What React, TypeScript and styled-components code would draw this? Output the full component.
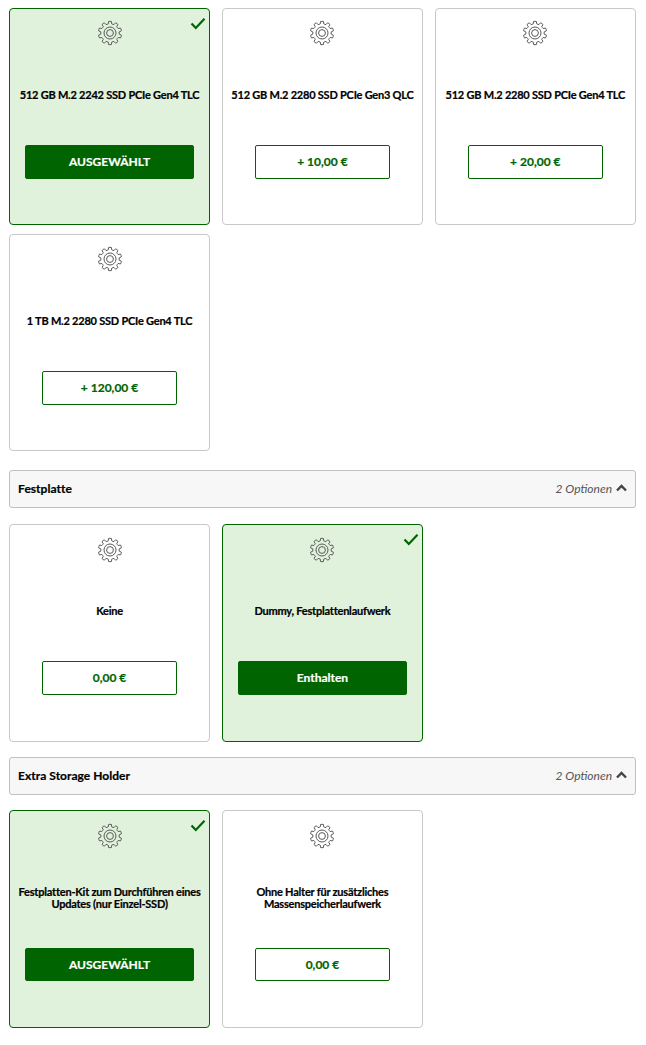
import React from "react";
import styled, { createGlobalStyle } from "styled-components";

const Global = createGlobalStyle`
  html, body { margin: 0; padding: 0; background: #fff; }
  body { font-family: Lato, "Liberation Sans", sans-serif; color: #000; }
`;

const Page = styled.div`
  width: 646px;
  box-sizing: border-box;
  padding: 8px 10px 0 9.1px;
  display: flex;
  flex-direction: column;
`;

const CardGrid = styled.div<{ $after: number }>`
  display: grid;
  grid-template-columns: repeat(3, 200.9px);
  column-gap: 12px;
  row-gap: 9px;
  margin-bottom: ${(p) => p.$after}px;
`;

type Metrics = { height: number; pad: number; title: number; button: number };
const BASE: Metrics = { height: 217, pad: 11, title: 99, button: 34 };
const MIDDLE: Metrics = { height: 218, pad: 12, title: 98, button: 34 };
const LAST: Metrics = { height: 218, pad: 12, title: 99, button: 33 };

const Card = styled.div<{ $selected?: boolean; $height: number; $pad: number }>`
  position: relative;
  height: ${(p) => p.$height}px;
  box-sizing: border-box;
  border: 1px solid ${(p) => (p.$selected ? "#006400" : "#c8c8c8")};
  border-radius: 4px;
  background: ${(p) => (p.$selected ? "#e0f1dc" : "#fff")};
  display: flex;
  flex-direction: column;
  align-items: center;
  padding-top: ${(p) => p.$pad}px;
`;

const GearWrap = styled.div`
  height: 26px;
  line-height: 0;
`;

const Title = styled.div<{ $height: number }>`
  height: ${(p) => p.$height}px;
  padding: 0 6px 2px;
  box-sizing: border-box;
  width: 100%;
  font-size: 11px;
  letter-spacing: -0.22px;
  line-height: 12px;
  font-weight: 700;
  -webkit-text-stroke: 0.2px #000;
  text-align: center;
  display: flex;
  align-items: center;
  justify-content: center;
`;

const Action = styled.div<{ $selected?: boolean; $height: number }>`
  box-sizing: border-box;
  height: ${(p) => p.$height}px;
  width: ${(p) => (p.$selected ? "169px" : "135px")};
  border: 1px solid #006400;
  border-radius: 2px;
  background: ${(p) => (p.$selected ? "#006400" : "#fff")};
  color: ${(p) => (p.$selected ? "#fff" : "#006400")};
  font-size: 12px;
  font-weight: 700;
  -webkit-text-stroke: 0.2px currentColor;
  padding-bottom: 1px;
  display: flex;
  align-items: center;
  justify-content: center;
`;

const Check = styled.svg`
  position: absolute;
  top: 8px;
  right: 3px;
`;

const Section = styled.div<{ $after: number }>`
  height: 38px;
  box-sizing: border-box;
  border: 1px solid #c0c0c0;
  border-radius: 3px;
  background: #f7f7f7;
  display: flex;
  align-items: center;
  justify-content: space-between;
  padding: 0 8px 2px 8px;
  margin-bottom: ${(p) => p.$after}px;
`;

const SectionTitle = styled.span`
  font-size: 12px;
  font-weight: 700;
  letter-spacing: 0.03px;
  -webkit-text-stroke: 0.2px #000;
`;

const SectionMeta = styled.span`
  display: flex;
  align-items: center;
  gap: 4px;
  font-size: 12px;
  font-style: italic;
  color: #555;
`;

function gearPath(cx: number, cy: number, teeth: number, ro: number, ri: number) {
  const pts: string[] = [];
  const step = (Math.PI * 2) / teeth;
  for (let i = 0; i < teeth; i++) {
    const a = i * step - Math.PI / 2;
    const p = (r: number, t: number) =>
      `${(cx + r * Math.cos(a + t * step)).toFixed(2)} ${(cy + r * Math.sin(a + t * step)).toFixed(2)}`;
    pts.push(`${i === 0 ? "M" : "L"}${p(ri, -0.3)}`);
    pts.push(`L${p(ro, -0.2)}`);
    pts.push(`Q${p(ro + 0.3, 0)} ${p(ro, 0.2)}`);
    pts.push(`L${p(ri, 0.3)}`);
    pts.push(`Q${p(ri - 0.3, 0.5)} ${p(ri, 0.7)}`);
  }
  return pts.join(" ") + "Z";
}

const Gear = () => (
  <svg width="26" height="26" viewBox="0 0 26 26" fill="none" stroke="#5a5a5a" strokeWidth="1">
    <path d={gearPath(13, 13, 10, 11.6, 9.3)} strokeLinejoin="round" />
    <circle cx="13" cy="13" r="6" />
    <circle cx="13" cy="13" r="3.4" />
  </svg>
);

const CheckMark = () => (
  <Check width="16" height="13" viewBox="0 0 16 13" fill="none" stroke="#006400" strokeWidth="2.2">
    <path d="M1.5 6.5 L5.8 11 L14.5 1.8" />
  </Check>
);

const Chevron = () => (
  <svg width="11" height="8" viewBox="0 0 11 8" fill="none" stroke="#444" strokeWidth="2.4">
    <path d="M1 6.5 L5.5 2 L10 6.5" />
  </svg>
);

type Opt = { title: string; action: string; selected?: boolean; m?: Metrics };

const OptionCard = ({ title, action, selected, m = BASE }: Opt) => (
  <Card $selected={selected} $height={m.height} $pad={m.pad}>
    {selected && <CheckMark />}
    <GearWrap>
      <Gear />
    </GearWrap>
    <Title $height={m.title}>{title}</Title>
    <Action $selected={selected} $height={m.button}>
      {action}
    </Action>
  </Card>
);

const SectionBar = ({ title, after }: { title: string; after: number }) => (
  <Section $after={after}>
    <SectionTitle>{title}</SectionTitle>
    <SectionMeta>
      2 Optionen <Chevron />
    </SectionMeta>
  </Section>
);

export default function App() {
  return (
    <Page>
      <Global />
      <CardGrid $after={19}>
        <OptionCard title="512 GB M.2 2242 SSD PCIe Gen4 TLC" action="AUSGEWÄHLT" selected />
        <OptionCard title="512 GB M.2 2280 SSD PCIe Gen3 QLC" action="+ 10,00 €" />
        <OptionCard title="512 GB M.2 2280 SSD PCIe Gen4 TLC" action="+ 20,00 €" />
        <OptionCard title="1 TB M.2 2280 SSD PCIe Gen4 TLC" action="+ 120,00 €" />
      </CardGrid>
      <SectionBar title="Festplatte" after={16} />
      <CardGrid $after={15}>
        <OptionCard title="Keine" action="0,00 €" m={MIDDLE} />
        <OptionCard title="Dummy, Festplattenlaufwerk" action="Enthalten" selected m={MIDDLE} />
      </CardGrid>
      <SectionBar title="Extra Storage Holder" after={15} />
      <CardGrid $after={0}>
        <OptionCard
          title="Festplatten-Kit zum Durchführen eines Updates (nur Einzel-SSD)"
          action="AUSGEWÄHLT"
          selected
          m={LAST}
        />
        <OptionCard title="Ohne Halter für zusätzliches Massenspeicherlaufwerk" action="0,00 €" m={LAST} />
      </CardGrid>
    </Page>
  );
}
